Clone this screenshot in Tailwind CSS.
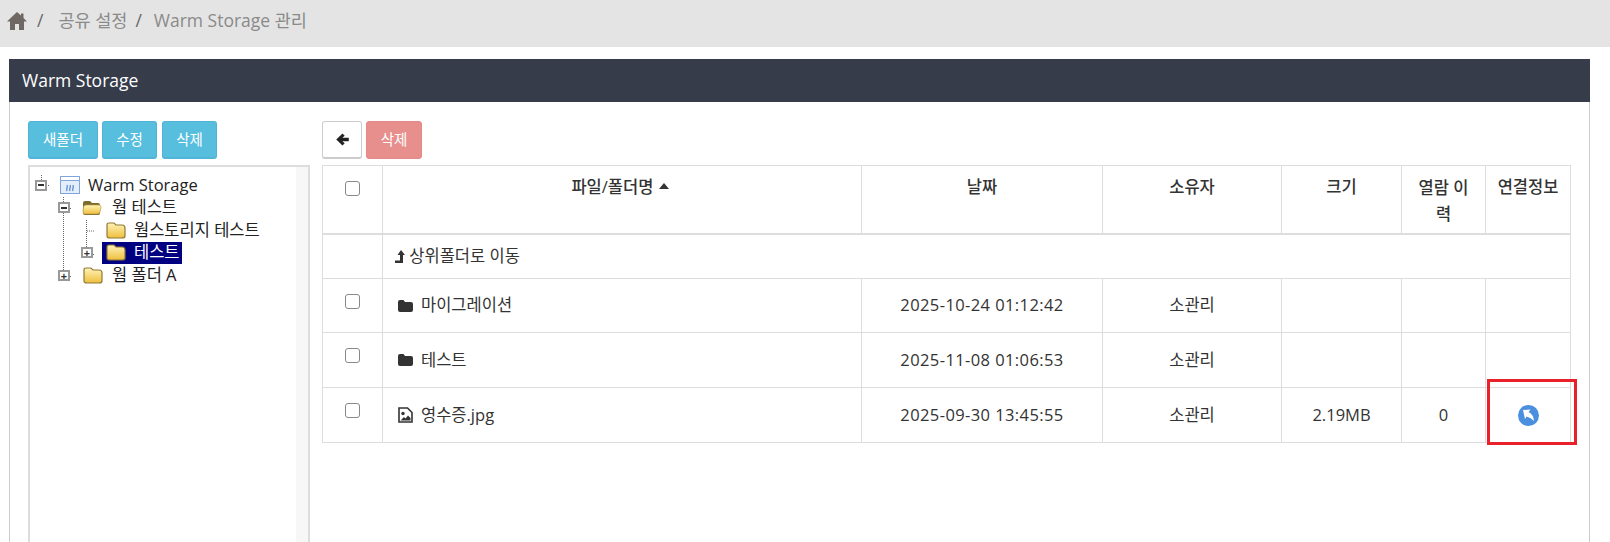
<!DOCTYPE html>
<html lang="ko">

<head>
    <meta charset="UTF-8">
    <title>Warm Storage 관리</title>
    <script src="https://cdn.jsdelivr.net/npm/@tailwindcss/browser@4"></script>
</head>

<body class="bg-white h-[542px] overflow-hidden text-[#333] font-['Open_Sans','Noto_Sans_CJK_KR',sans-serif]">

    <!-- Breadcrumb -->
    <div class="h-[47px] bg-[#e4e4e4] flex items-center pl-[7px] pb-[6px] text-[17.5px] text-[#8a8a8a]">
        <svg class="w-[20px] h-[18px] text-[#6f6763]" viewBox="0 0 20 18" fill="currentColor">
            <path d="M10 0 L14 3.6 V1.5 H16.5 V5.9 L20 9.5 H17 V18 H12 V12 H8 V18 H3 V9.5 H0 Z" />
        </svg>
        <span class="ml-[10px] text-[#666]">/</span>
        <span class="ml-[15px]">공유 설정</span>
        <span class="ml-[8px] text-[#666]">/</span>
        <span class="ml-[12px]">Warm Storage 관리</span>
    </div>

    <!-- Panel -->
    <div class="pl-[9px] pr-[20px] pt-[12px]">
        <div class="h-[43px] bg-[#363c4a] text-white text-[17.5px] flex items-center pl-[13px]">Warm Storage</div>

        <div class="h-[440px] border-x border-[#ccc] pl-[18px] pt-[19px] flex relative">

            <!-- shared folder gradient -->
            <svg class="absolute w-0 h-0">
                <defs>
                    <linearGradient id="folderFill" x1="0" y1="0" x2="0" y2="1">
                        <stop offset="0" stop-color="#fff3b8" />
                        <stop offset="1" stop-color="#eebf3c" />
                    </linearGradient>
                </defs>
            </svg>

            <!-- Folder tree -->
            <div class="w-[282px] shrink-0">
                <div class="flex h-[38px] text-[14.5px] text-white">
                    <button class="w-[70px] rounded-[3px] bg-[#57bede] border border-[#4fb4d6] border-b-2">새폴더</button>
                    <button class="ml-[4px] w-[55px] rounded-[3px] bg-[#57bede] border border-[#4fb4d6] border-b-2">수정</button>
                    <button class="ml-[5px] w-[55px] rounded-[3px] bg-[#57bede] border border-[#4fb4d6] border-b-2">삭제</button>
                </div>

                <div class="mt-[6px] h-[377px] border-2 border-b-0 border-[#ddd] relative text-[16.5px] text-[#222] flex">
                    <div class="flex-1 pt-[7px] relative">
                        <!-- tree connector lines -->
                        <svg class="absolute left-0 top-0 w-[120px] h-[120px]" viewBox="0 0 120 120" fill="none" stroke="#666" stroke-dasharray="1 1">
                            <path d="M11.5 8V13 M33.5 30V103 M56.5 53V81 M57 64H65 M18 18.5H20 M40 41.5H42 M63 87.5H65 M40 109.5H42" />
                        </svg>

                        <div class="h-[22.5px] flex items-center relative">
                            <span class="ml-[5px] w-[12px] h-[11px] border-2 border-[#999] bg-white flex items-center justify-center"><span class="w-[6px] h-[2px] bg-[#333]"></span></span>
                            <svg class="ml-[13px] w-[20px] h-[18px]" viewBox="0 0 20 18">
                                <rect x="0.5" y="0.5" width="19" height="17" fill="#e4eefb" stroke="#7fa6dc" />
                                <path d="M0.5 0.5H19.5V4.5H0.5Z" fill="#fff" stroke="#7fa6dc" />
                                <path d="M7 15c-1.4-2.4 1.4-3.6 0-6M10 15c-1.4-2.4 1.4-3.6 0-6M13 15c-1.4-2.4 1.4-3.6 0-6" fill="none" stroke="#5f8ad0" stroke-width="1.3" />
                            </svg>
                            <span class="ml-[8px]">Warm Storage</span>
                        </div>

                        <div class="h-[22.5px] flex items-center relative">
                            <span class="ml-[28px] w-[12px] h-[11px] border-2 border-[#999] bg-white flex items-center justify-center"><span class="w-[6px] h-[2px] bg-[#333]"></span></span>
                            <svg class="ml-[12px] w-[20px] h-[16px]" viewBox="0 0 20 16">
                                <path d="M1 13V3Q1 1 3 1H8L10 3H16Q18 3 18 5V13Q18 15 16 15H3Q1 15 1 13Z" fill="#7d6a2c" />
                                <path d="M1.5 7Q2 5 4 5H17Q19.5 5 19 8L18 12Q17.5 14 15 14H3Q1 14 1 12Z" fill="url(#folderFill)" stroke="#b8963c" stroke-width="0.6" />
                            </svg>
                            <span class="ml-[10px]">웜 테스트</span>
                        </div>

                        <div class="h-[22.5px] flex items-center relative">
                            <svg class="ml-[76px] w-[20px] h-[17px]" viewBox="0 0 20 17">
                                <path d="M1 14V3Q1 1 3 1H8L10 3H16Q19 3 19 6V14Q19 16 16 16H4Q1 16 1 14Z" fill="url(#folderFill)" stroke="#8f7a35" stroke-width="1.2" />
                            </svg>
                            <span class="ml-[8px]">웜스토리지 테스트</span>
                        </div>

                        <div class="h-[22.5px] flex items-center relative">
                            <span class="ml-[51px] w-[12px] h-[11px] border-2 border-[#999] bg-white flex items-center justify-center text-[#333] text-[11px] leading-none font-bold">+</span>
                            <span class="ml-[9px] w-[80px] h-[22px] bg-[#000080] text-white flex items-center">
                                <svg class="ml-[4px] w-[20px] h-[17px]" viewBox="0 0 20 17">
                                    <path d="M1 14V3Q1 1 3 1H8L10 3H16Q19 3 19 6V14Q19 16 16 16H4Q1 16 1 14Z" fill="url(#folderFill)" stroke="#8f7a35" stroke-width="1.2" />
                                </svg>
                                <span class="ml-[8px]">테스트</span>
                            </span>
                        </div>

                        <div class="h-[22.5px] flex items-center relative">
                            <span class="ml-[28px] w-[12px] h-[11px] border-2 border-[#999] bg-white flex items-center justify-center text-[#333] text-[11px] leading-none font-bold">+</span>
                            <svg class="ml-[13px] w-[20px] h-[17px]" viewBox="0 0 20 17">
                                <path d="M1 14V3Q1 1 3 1H8L10 3H16Q19 3 19 6V14Q19 16 16 16H4Q1 16 1 14Z" fill="url(#folderFill)" stroke="#8f7a35" stroke-width="1.2" />
                            </svg>
                            <span class="ml-[9px]">웜 폴더 A</span>
                        </div>
                    </div>
                    <div class="w-[12px] bg-[#f7f7f7]"></div>
                </div>
            </div>

            <!-- File list -->
            <div class="ml-[12px] w-[1248px]">
                <div class="flex gap-[4px] h-[38px] text-[14.5px] text-white">
                    <button class="w-[40px] rounded-[3px] bg-white border border-[#ccc] border-b-2 flex items-center justify-center">
                        <svg class="w-[13px] h-[13px]" viewBox="0 0 13 13.5" fill="#222">
                            <path d="M6.5 0.5 L8.8 2.8 L6.3 5 H13 V8.5 H6.3 L8.8 10.7 L6.5 13 L0 6.75 Z" />
                        </svg>
                    </button>
                    <button class="w-[56px] rounded-[3px] bg-[#e78f8d] border border-[#e58886]">삭제</button>
                </div>

                <table class="mt-[6px] table-fixed border-collapse w-[1248px] text-[16.5px] text-[#333]">
                    <colgroup>
                        <col class="w-[60px]">
                        <col class="w-[479px]">
                        <col class="w-[241px]">
                        <col class="w-[179px]">
                        <col class="w-[120px]">
                        <col class="w-[84px]">
                        <col class="w-[85px]">
                    </colgroup>
                    <thead>
                        <tr class="h-[68px] text-center align-top font-medium">
                            <th class="border border-[#ddd] border-b-2 pt-[15px] font-medium"><input type="checkbox" class="appearance-none block mx-auto w-[15px] h-[15px] border border-[#888] rounded-[3px] bg-white"></th>
                            <th class="border border-[#ddd] border-b-2 pt-[9px] pr-[4px] font-medium">파일/폴더명 <svg class="inline-block ml-[1px] w-[10px] h-[6px] align-[4px]" viewBox="0 0 10 6" fill="#333"><path d="M5 0 L10 6 H0 Z" /></svg></th>
                            <th class="border border-[#ddd] border-b-2 pt-[9px] font-medium">날짜</th>
                            <th class="border border-[#ddd] border-b-2 pt-[9px] font-medium">소유자</th>
                            <th class="border border-[#ddd] border-b-2 pt-[9px] font-medium">크기</th>
                            <th class="border border-[#ddd] border-b-2 pt-[9px] px-[10px] font-medium leading-[26px]">열람 이력</th>
                            <th class="border border-[#ddd] border-b-2 pt-[9px] font-medium">연결정보</th>
                        </tr>
                    </thead>
                    <tbody>
                        <tr class="h-[45px]">
                            <td class="border border-[#ddd]"></td>
                            <td colspan="6" class="border border-[#ddd] pl-[12px]">
                                <svg class="inline-block w-[10px] h-[13px] align-[-1px]" viewBox="0 0 10 13" fill="#333"><path d="M6 0 L10 5 H8 V13 H0 V10.5 H5 V5 H2.5 Z" /></svg>
                                상위폴더로 이동
                            </td>
                        </tr>
                        <tr class="h-[54px]">
                            <td class="border border-[#ddd] align-top pt-[15px]"><input type="checkbox" class="appearance-none block mx-auto w-[15px] h-[15px] border border-[#888] rounded-[3px] bg-white"></td>
                            <td class="border border-[#ddd] pl-[15px]">
                                <span class="flex items-center gap-[8px]">
                                    <svg class="w-[15px] h-[12px]" viewBox="0 0 15 12" fill="#333"><path d="M0 2Q0 0 2 0H5.5L7 2H13Q15 2 15 4V10Q15 12 13 12H2Q0 12 0 10Z" /></svg>
                                    마이그레이션
                                </span>
                            </td>
                            <td class="border border-[#ddd] text-center tracking-[0.4px]">2025-10-24 01:12:42</td>
                            <td class="border border-[#ddd] text-center">소관리</td>
                            <td class="border border-[#ddd]"></td>
                            <td class="border border-[#ddd]"></td>
                            <td class="border border-[#ddd]"></td>
                        </tr>
                        <tr class="h-[55px]">
                            <td class="border border-[#ddd] align-top pt-[15px]"><input type="checkbox" class="appearance-none block mx-auto w-[15px] h-[15px] border border-[#888] rounded-[3px] bg-white"></td>
                            <td class="border border-[#ddd] pl-[15px]">
                                <span class="flex items-center gap-[8px]">
                                    <svg class="w-[15px] h-[12px]" viewBox="0 0 15 12" fill="#333"><path d="M0 2Q0 0 2 0H5.5L7 2H13Q15 2 15 4V10Q15 12 13 12H2Q0 12 0 10Z" /></svg>
                                    테스트
                                </span>
                            </td>
                            <td class="border border-[#ddd] text-center tracking-[0.4px]">2025-11-08 01:06:53</td>
                            <td class="border border-[#ddd] text-center">소관리</td>
                            <td class="border border-[#ddd]"></td>
                            <td class="border border-[#ddd]"></td>
                            <td class="border border-[#ddd]"></td>
                        </tr>
                        <tr class="h-[55px]">
                            <td class="border border-[#ddd] align-top pt-[15px]"><input type="checkbox" class="appearance-none block mx-auto w-[15px] h-[15px] border border-[#888] rounded-[3px] bg-white"></td>
                            <td class="border border-[#ddd] pl-[15px]">
                                <span class="flex items-center gap-[8px]">
                                    <svg class="w-[15px] h-[16px]" viewBox="0 0 15 16"><path d="M1 1H9.5L14 5.5V15H1Z" fill="#fff" stroke="#333" stroke-width="1.6" /><circle cx="5" cy="6.5" r="1.7" fill="#333" /><path d="M2.5 13.5L6 10L7.5 11.5L10 8.5L12.5 11V13.5Z" fill="#333" /></svg>
                                    영수증.jpg
                                </span>
                            </td>
                            <td class="border border-[#ddd] text-center tracking-[0.4px]">2025-09-30 13:45:55</td>
                            <td class="border border-[#ddd] text-center">소관리</td>
                            <td class="border border-[#ddd] text-center">2.19MB</td>
                            <td class="border border-[#ddd] text-center">0</td>
                            <td class="border border-[#ddd]">
                                <svg class="block mx-auto w-[21px] h-[21px]" viewBox="0 0 21 21"><circle cx="10.5" cy="10.5" r="10.5" fill="#4a90df" /><path d="M5 5 L12.5 4.5 L10.6 7 Q15.5 9.5 16 16 Q13 12.5 8.6 11.5 L7 14 Z" fill="#fff" /></svg>
                            </td>
                        </tr>
                    </tbody>
                </table>
            </div>

            <!-- Highlight annotation -->
            <div class="absolute left-[1477px] top-[277px] w-[90px] h-[66px] border-[3px] border-[#e8212a] pointer-events-none"></div>
        </div>
    </div>

</body>

</html>
